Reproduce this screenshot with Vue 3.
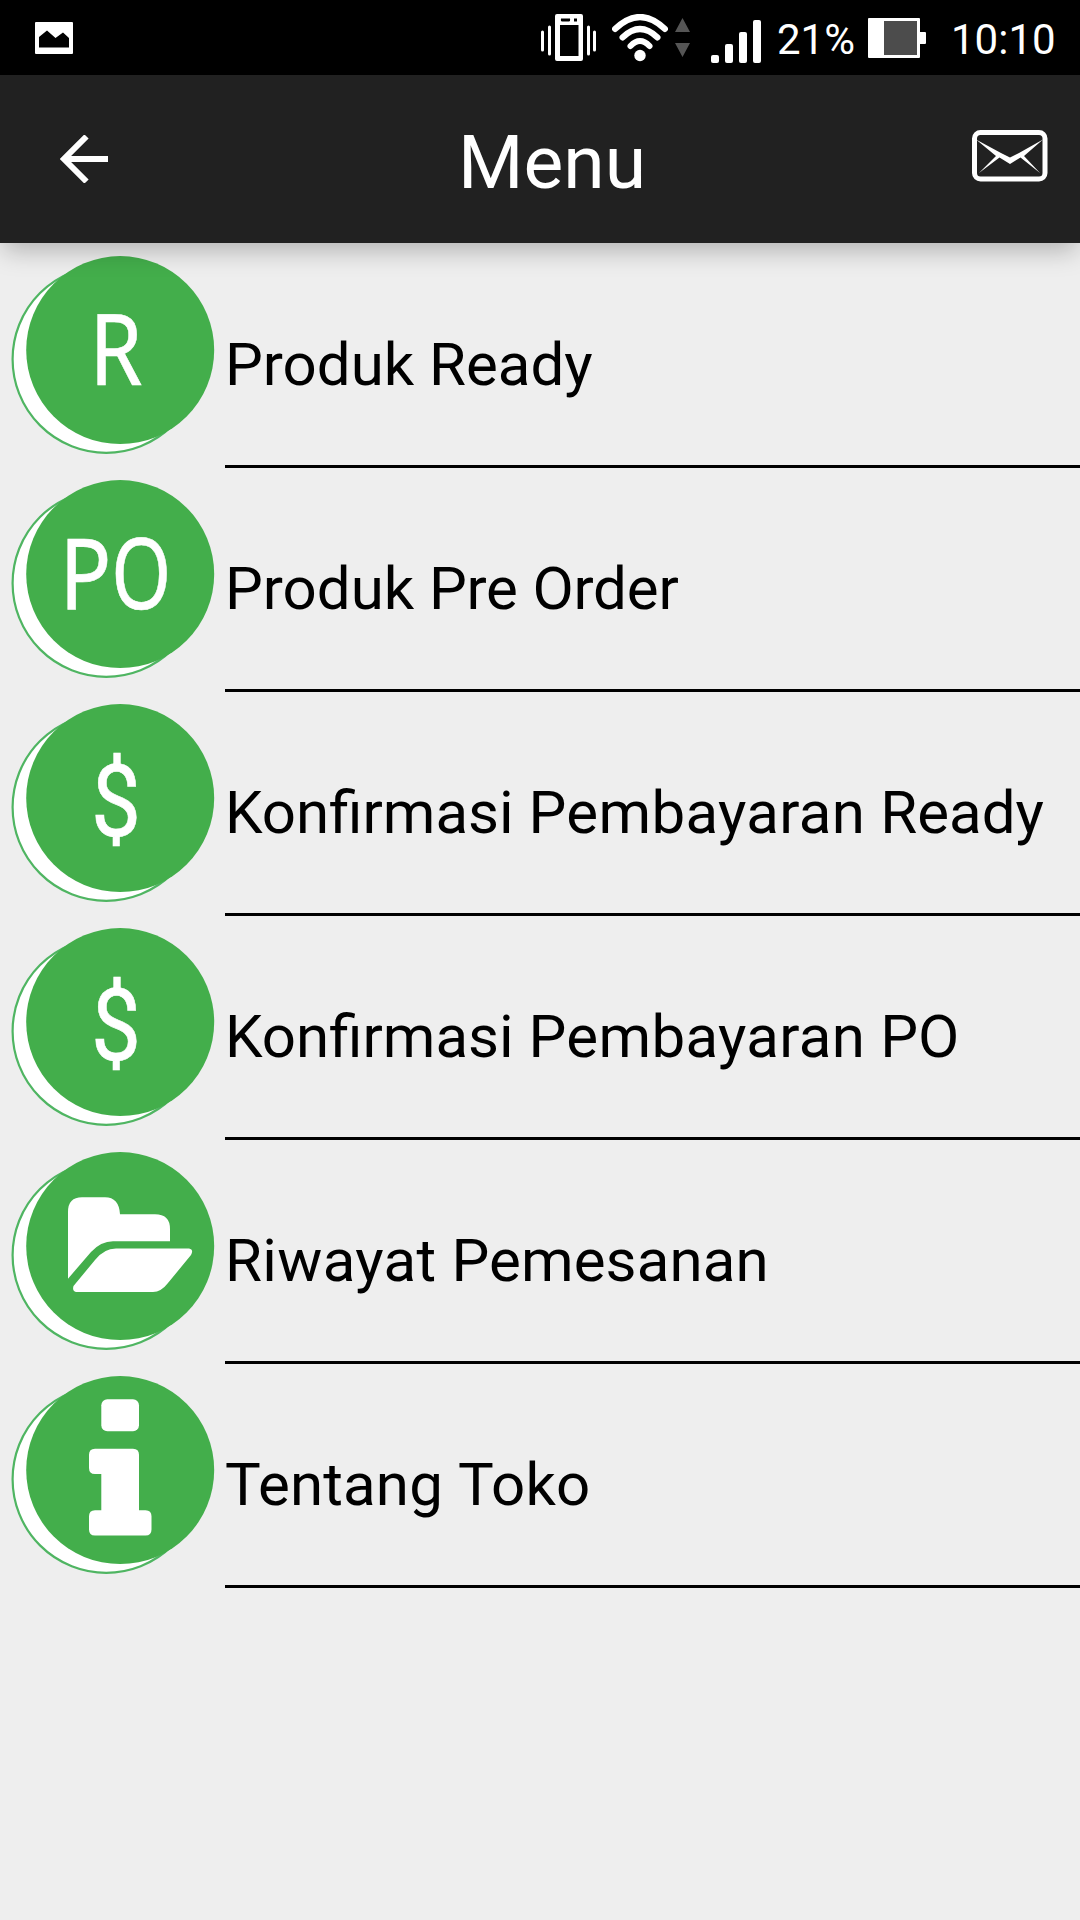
<template>
  <div class="screen">
    <div class="statusbar">
      <svg class="notif" width="38" height="32" viewBox="0 0 38 32">
        <path
          fill="#fff"
          fill-rule="evenodd"
          d="M1 0H37Q38 0 38 1V31Q38 32 37 32H1Q0 32 0 31V1Q0 0 1 0ZM4 15V25.500H34V16L28 10.500L20.500 16L12 8.500Z"
        />
      </svg>
      <svg class="vibrate" width="56" height="48" viewBox="0 0 56 48">
        <path
          fill="#fff"
          fill-rule="evenodd"
          d="M16 0H40Q42 0 42 2V45Q42 47 40 47H16Q14 47 14 45V2Q14 0 16 0ZM19 11V42H37.500V11ZM20 4.500Q19.500 7.500 21 7.500H28Q29.500 7.500 29 4.500ZM33 4.500V7.500H36V4.500Z"
        />
        <path d="M1.500 18V36M8.500 13V40M47.500 13V40M53.500 18V36" stroke="#fff" stroke-width="3" stroke-linecap="round" />
      </svg>
      <svg class="wifi" width="56" height="48" viewBox="0 0 56 48">
        <g fill="none" stroke="#fff" stroke-width="6" stroke-linecap="round">
          <path d="M3 15Q28 -9 53 15" />
          <path d="M10.500 23.500Q28 6.500 45.500 23.500" />
          <path d="M18.500 32Q28 22 37.500 32" />
        </g>
        <circle cx="28" cy="41.500" r="5.700" fill="#fff" />
      </svg>
      <svg class="arrows" width="16" height="40" viewBox="0 0 16 40">
        <path d="M7.500 0L15 14H0ZM7.500 39L15 25H0Z" fill="#555" />
      </svg>
      <svg class="signal" width="50" height="43" viewBox="0 0 50 43">
        <g fill="#fff">
          <rect x="0" y="35" width="8" height="8" rx="2" />
          <rect x="14" y="24" width="8" height="19" rx="2" />
          <rect x="28" y="12" width="8" height="31" rx="2" />
          <rect x="42" y="0" width="8" height="43" rx="2" />
        </g>
      </svg>
      <span class="percent">21%</span>
      <svg class="battery" width="58" height="40" viewBox="0 0 58 40">
        <path d="M1 0H51Q52 0 52 1V14H57Q58 14 58 15V25Q58 26 57 26H52V39Q52 40 51 40H1Q0 40 0 39V1Q0 0 1 0Z" fill="#fff" />
        <rect x="16" y="3" width="33" height="34" fill="#4c4c4c" />
      </svg>
      <span class="clock">10:10</span>
    </div>

    <header class="toolbar">
      <svg class="back" width="48" height="48" viewBox="0 0 48 48">
        <path d="M26.500 1.500L4 24L26.500 46.500M4 24H48" fill="none" stroke="#fff" stroke-width="6" />
      </svg>
      <h1 class="title">Menu</h1>
      <svg class="mail" width="76" height="52" viewBox="0 0 76 52">
        <rect x="2.500" y="2.500" width="70.500" height="46.500" rx="6" fill="none" stroke="#fff" stroke-width="5" />
        <path d="M4 9.500L29 23L38 27.500L47 23L71 9.500L52 26L68 43L48.500 27.500L38 34L27.500 27.500L7 43L24 26Z" fill="#fff" />
      </svg>
    </header>

    <ul class="menu">
      <li v-for="(item, i) in items" :key="i" class="item">
        <svg class="icon" width="225" height="224" viewBox="0 0 225 224">
          <circle cx="106.200" cy="115.200" r="93.600" fill="#fff" stroke="#4fb562" stroke-width="2.200" />
          <circle cx="120.200" cy="106.100" r="94" fill="#43ae4b" />
          <template v-if="item.letters">
            <text
              v-for="l in item.letters"
              :key="l.char"
              :class="['letter', { 'letter--money': l.char === '$' }]"
              :x="l.x"
              :y="l.y"
              :textLength="l.width"
              lengthAdjust="spacingAndGlyphs"
            >{{ l.char }}</text>
          </template>
          <g v-else-if="item.icon === 'folder'" fill="#fff">
            <path d="M68 138.700V72Q68 57.300 82 57.300H105Q119 57.300 120 74.300H155Q170 74.300 170 89V101.300H113Q101 101.300 91 112Z" />
            <path d="M116 108.500H189Q194 109.500 191 115L168 143Q161 152 153 152H76Q72 151 73.500 146L95 120Q104 108.500 116 108.500Z" />
          </g>
          <g v-else fill="#fff">
            <rect x="101.300" y="35.300" width="37.700" height="32" rx="6" />
            <path d="M95 84.700H133Q139 84.700 139 90.700V146.300H145.500Q151.500 146.300 151.500 152.300V165.500Q151.500 171.500 145.500 171.500H95Q89 171.500 89 165.500V152.300Q89 146.300 95 146.300H101.300V110H95Q89 110 89 104V90.700Q89 84.700 95 84.700Z" />
          </g>
        </svg>
        <span class="label">
          <template v-for="(word, j) in item.words" :key="j">{{ j ? ' ' : '' }}<span :style="{ letterSpacing: word.spacing }">{{ word.text }}</span></template>
        </span>
      </li>
    </ul>
  </div>
</template>

<script setup>
// 'normal' keeps the fi ligature
const w = (text, spacing) => ({ text, spacing: spacing ? spacing + 'px' : 'normal' });

const dollar = { char: '$', x: 91, y: 143.5, width: 50 };

const items = [
  {
    words: [w('Produk'), w('Ready')],
    letters: [{ char: 'R', x: 89.5, y: 141.3, width: 53 }],
  },
  {
    words: [w('Produk'), w('Pre', -0.3), w('Order', -0.2)],
    letters: [
      { char: 'P', x: 59.5, y: 141.3, width: 52 },
      { char: 'O', x: 111.2, y: 141.3, width: 60 },
    ],
  },
  { words: [w('Konfirmasi'), w('Pembayaran', 0.35), w('Ready')], letters: [dollar] },
  { words: [w('Konfirmasi'), w('Pembayaran', 0.35), w('PO')], letters: [dollar] },
  { words: [w('Riwayat', 0.35), w('Pemesanan', 0.12)], icon: 'folder' },
  { words: [w('Tentang', 0.15), w('Toko', 0.2)], icon: 'info' },
];
</script>

<style>
body {
  margin: 0;
  background: #eee;
}
</style>

<style scoped>
.screen {
  width: 1080px;
  height: 1920px;
  overflow: hidden;
  background: #eee;
  font-family: Roboto, sans-serif;
}

svg {
  display: block;
  flex: none;
}

.statusbar {
  display: flex;
  align-items: flex-start;
  height: 75px;
  background: #000;
  color: #fff;
  font-size: 42px;
  line-height: 50px;
}

.notif {
  margin: 22px 0 0 35px;
}

.vibrate {
  margin: 14px 0 0 468px;
}

.wifi {
  margin: 14px 0 0 15px;
}

.arrows {
  margin: 18px 0 0 7px;
}

.signal {
  margin: 20px 0 0 20px;
}

.percent {
  width: 91px;
  margin: 15px 0 0 16px;
}

.battery {
  margin: 18px 0 0 0;
}

.clock {
  margin: 15px 0 0 25px;
}

.toolbar {
  position: relative;
  z-index: 1;
  display: flex;
  height: 168px;
  background: #212121;
  box-shadow: 0 10px 24px -3px rgba(0, 0, 0, 0.26);
}

.back {
  margin: 60px 0 0 60px;
}

.title {
  width: 190px;
  margin: 43px 0 0 350px;
  color: #fff;
  font-size: 75px;
  font-weight: 400;
  line-height: 88px;
}

.mail {
  margin: 55px 0 0 324px;
}

.menu {
  margin: 0;
  padding: 1px 0 0;
  list-style: none;
}

.item {
  display: flex;
  height: 224px;
}

.letter {
  fill: #fff;
  stroke: #fff;
  stroke-width: 0.6px;
  font-family: "Noto Sans", sans-serif;
  font-size: 98px;
}

.letter--money {
  font-family: Roboto, sans-serif;
  font-size: 100px;
}

.label {
  flex: 1;
  box-sizing: border-box;
  padding-top: 86px;
  border-bottom: 3px solid #000;
  color: #000;
  font-size: 60px;
  line-height: 70px;
  white-space: nowrap;
}
</style>
